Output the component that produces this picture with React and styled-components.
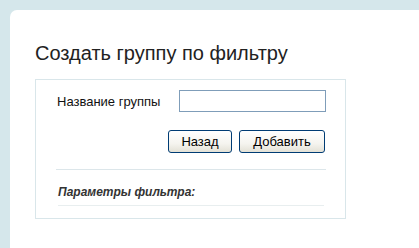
import React from "react";
import styled, { createGlobalStyle } from "styled-components";

const Global = createGlobalStyle`
  html, body {
    margin: 0;
    padding: 0;
    background: #d5e7eb;
  }
  body {
    font-family: "Liberation Sans", Arial, sans-serif;
  }
`;

function App() {
  return (
    <Page>
      <Global />
      <Panel>
        <Title>Создать группу по фильтру</Title>
        <Box>
          <FieldRow>
            <Label htmlFor="group-name">Название группы</Label>
            <TextInput id="group-name" type="text" />
          </FieldRow>
          <Actions>
            <Button type="button" $width={64}>Назад</Button>
            <Button type="button" $width={86}>Добавить</Button>
          </Actions>
          <Divider />
          <Params>Параметры фильтра:</Params>
        </Box>
      </Panel>
    </Page>
  );
}

export default App;

const Page = styled.div`
  padding: 10px 0 0 10px;
  height: 248px;
  box-sizing: border-box;
  overflow: hidden;
`;

const Panel = styled.div`
  background: #fff;
  border-top-left-radius: 7px;
  height: 100%;
  padding: 31px 0 0 25px;
  box-sizing: border-box;
`;

const Title = styled.h1`
  margin: 0 0 14px 0;
  font-family: "Liberation Sans", Arial, sans-serif;
  font-weight: normal;
  font-size: 20px;
  line-height: 24px;
  color: #222;
`;

const Box = styled.div`
  width: 311px;
  box-sizing: border-box;
  border: 1px solid #d9e6ea;
  padding: 10px 19px 12px 20px;
`;

const FieldRow = styled.div`
  display: grid;
  grid-template-columns: 123px 147px;
  align-items: center;
`;

const Label = styled.label`
  font-family: "Liberation Sans", Arial, sans-serif;
  font-size: 13px;
  color: #111;
  padding-left: 1px;
`;

const TextInput = styled.input`
  width: 147px;
  height: 22px;
  box-sizing: border-box;
  border: 1px solid #7f9db9;
  margin: 0;
  padding: 2px 3px;
  font-family: "Liberation Sans", Arial, sans-serif;
  font-size: 13px;
  outline: none;
`;

const Actions = styled.div`
  display: flex;
  justify-content: flex-end;
  gap: 7px;
  margin-top: 18px;
  padding-right: 1px;
`;

const Button = styled.button`
  width: ${(p) => p.$width}px;
  height: 23px;
  box-sizing: border-box;
  margin: 0;
  padding: 0 0 1px;
  border: 1px solid #003c74;
  border-radius: 3px;
  background: linear-gradient(#ffffff, #f5f4ef 60%, #e3e1d6);
  font-family: "Liberation Sans", Arial, sans-serif;
  font-size: 13px;
  color: #000;
  cursor: pointer;
`;

const Divider = styled.div`
  height: 1px;
  background: #dce6ea;
  margin-top: 16px;
`;

const Params = styled.div`
  margin: 15px 2px 0;
  padding-bottom: 6px;
  border-bottom: 1px solid #e8eeef;
  font-family: "Liberation Sans", Arial, sans-serif;
  font-size: 12px;
  font-weight: bold;
  font-style: italic;
  color: #333;
  line-height: 14px;
`;
